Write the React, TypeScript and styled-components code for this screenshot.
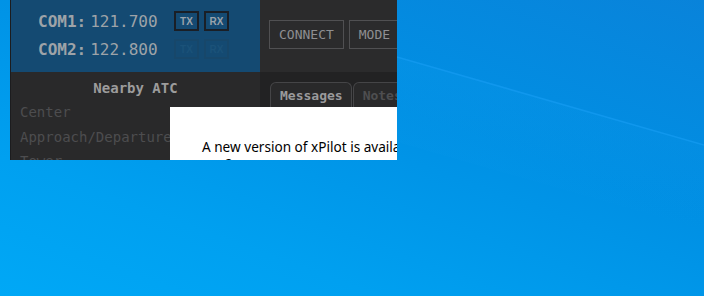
import React from "react";
import styled, { createGlobalStyle } from "styled-components";

const GlobalStyle = createGlobalStyle`
  html, body { margin: 0; padding: 0; }
  body { width: 704px; height: 296px; overflow: hidden; }
`;

const Desktop = styled.div`
  position: relative;
  width: 704px;
  height: 296px;
  overflow: hidden;
  background: linear-gradient(200deg, #0983da 0%, #0090e4 40%, #00a0f0 75%, #00a8f6 100%);
`;

const Wallpaper = styled.svg`
  position: absolute;
  inset: 0;
  width: 704px;
  height: 296px;
`;

const AppWindow = styled.div`
  position: absolute;
  left: 10px;
  top: 0;
  width: 387px;
  height: 160px;
  overflow: hidden;
  display: flex;
  border-left: 1px solid #1c1c1e;
  box-sizing: border-box;
  font-family: "DejaVu Sans Mono", "Liberation Mono", monospace;
`;

const LeftPanel = styled.div`
  width: 249px;
  flex: none;
  display: flex;
  flex-direction: column;
  background: #29292a;
`;

const RadioStack = styled.div`
  flex: none;
  height: 72px;
  box-sizing: border-box;
  background: #144a72;
  padding: 11px 31px 0 27px;
  display: flex;
  flex-direction: column;
  gap: 8px;
`;

const RadioRow = styled.div`
  height: 20px;
  display: flex;
  align-items: center;
  color: #9ea3a8;
  font-size: 16px;
  white-space: nowrap;
`;

const ComLabel = styled.span`
  font-weight: bold;
`;

const Freq = styled.span`
  margin-left: 4px;
`;

const Toggles = styled.div`
  margin-left: auto;
  display: flex;
  gap: 5px;
`;

const Toggle = styled.div<{ $active: boolean }>`
  width: 25px;
  height: 20px;
  box-sizing: border-box;
  border: 2px solid ${(p) => (p.$active ? "#1a1f26" : "#17476a")};
  display: flex;
  align-items: center;
  justify-content: center;
  font-size: 10px;
  font-weight: bold;
  color: ${(p) => (p.$active ? "#9aa3ab" : "#1b5279")};
  font-family: "Liberation Sans", Arial, sans-serif;
`;

const AtcSection = styled.div`
  flex: 1;
  padding-top: 6px;
`;

const AtcTitle = styled.div`
  text-align: center;
  font-weight: bold;
  font-size: 14px;
  line-height: 20px;
  color: #9c9c9c;
`;

const AtcList = styled.div`
  padding: 2px 0 0 9px;
  display: flex;
  flex-direction: column;
`;

const AtcItem = styled.div`
  font-size: 14px;
  line-height: 24.5px;
  color: #4d4d4f;
  white-space: nowrap;
`;

const RightPanel = styled.div`
  flex: 1;
  display: flex;
  flex-direction: column;
  background: #2b2b2c;
`;

const Toolbar = styled.div`
  flex: none;
  height: 72px;
  box-sizing: border-box;
  padding: 20px 0 0 9px;
  display: flex;
  gap: 5px;
`;

const ToolButton = styled.div`
  height: 29px;
  box-sizing: border-box;
  padding: 0 9px;
  border: 1px solid #505052;
  display: flex;
  align-items: center;
  font-size: 13px;
  color: #8f8f92;
  white-space: nowrap;
  flex: none;
`;

const TabArea = styled.div`
  flex: 1;
  background: #222223;
  padding: 10px 0 0 10px;
  display: flex;
  gap: 1px;
  align-items: flex-start;
`;

const Tab = styled.div<{ $active: boolean }>`
  height: 30px;
  box-sizing: border-box;
  padding: 5px 8px 0 9px;
  border: 1px solid #454547;
  border-bottom: none;
  border-radius: 6px 6px 0 0;
  font-size: 13px;
  font-weight: bold;
  background: #29292a;
  color: ${(p) => (p.$active ? "#9a9a9c" : "#4e4e50")};
  white-space: nowrap;
  flex: none;
`;

const Dialog = styled.div`
  position: absolute;
  left: 159px;
  top: 107px;
  width: 420px;
  height: 120px;
  background: #ffffff;
  padding: 31px 0 0 32px;
  box-sizing: border-box;
  font-family: "Noto Sans", "Open Sans", sans-serif;
  font-size: 13.6px;
  line-height: 17px;
  color: #000000;
`;

const DialogLine = styled.div<{ $indent?: number }>`
  white-space: nowrap;
  padding-left: ${(p) => p.$indent ?? 0}px;
`;

const radios = [
  { label: "COM1:", freq: "121.700", active: true },
  { label: "COM2:", freq: "122.800", active: false },
];

export default function App() {
  return (
    <>
      <GlobalStyle />
      <Desktop>
        <Wallpaper viewBox="0 0 704 296">
          <defs>
            <linearGradient id="under" x1="0" y1="0" x2="0" y2="1">
              <stop offset="0" stopColor="#0a98ea" stopOpacity="0.3" />
              <stop offset="1" stopColor="#0a98ea" stopOpacity="0" />
            </linearGradient>
          </defs>
          <polygon points="390,55 704,145 704,230 390,140" fill="url(#under)" />
          <line x1="390" y1="55" x2="704" y2="145" stroke="#169cf2" strokeWidth="1.6" opacity="0.7" />
        </Wallpaper>
        <AppWindow>
          <LeftPanel>
            <RadioStack>
              {radios.map((r) => (
                <RadioRow key={r.label}>
                  <ComLabel>{r.label}</ComLabel>
                  <Freq>{r.freq}</Freq>
                  <Toggles>
                    <Toggle $active={r.active}>TX</Toggle>
                    <Toggle $active={r.active}>RX</Toggle>
                  </Toggles>
                </RadioRow>
              ))}
            </RadioStack>
            <AtcSection>
              <AtcTitle>Nearby ATC</AtcTitle>
              <AtcList>
                <AtcItem>Center</AtcItem>
                <AtcItem>Approach/Departure</AtcItem>
                <AtcItem>Tower</AtcItem>
              </AtcList>
            </AtcSection>
          </LeftPanel>
          <RightPanel>
            <Toolbar>
              <ToolButton>CONNECT</ToolButton>
              <ToolButton>MODE</ToolButton>
            </Toolbar>
            <TabArea>
              <Tab $active>Messages</Tab>
              <Tab $active={false}>Notes</Tab>
            </TabArea>
          </RightPanel>
          <Dialog>
            <DialogLine>A new version of xPilot is available. Would you like to</DialogLine>
            <DialogLine $indent={24}>?</DialogLine>
          </Dialog>
        </AppWindow>
      </Desktop>
    </>
  );
}
